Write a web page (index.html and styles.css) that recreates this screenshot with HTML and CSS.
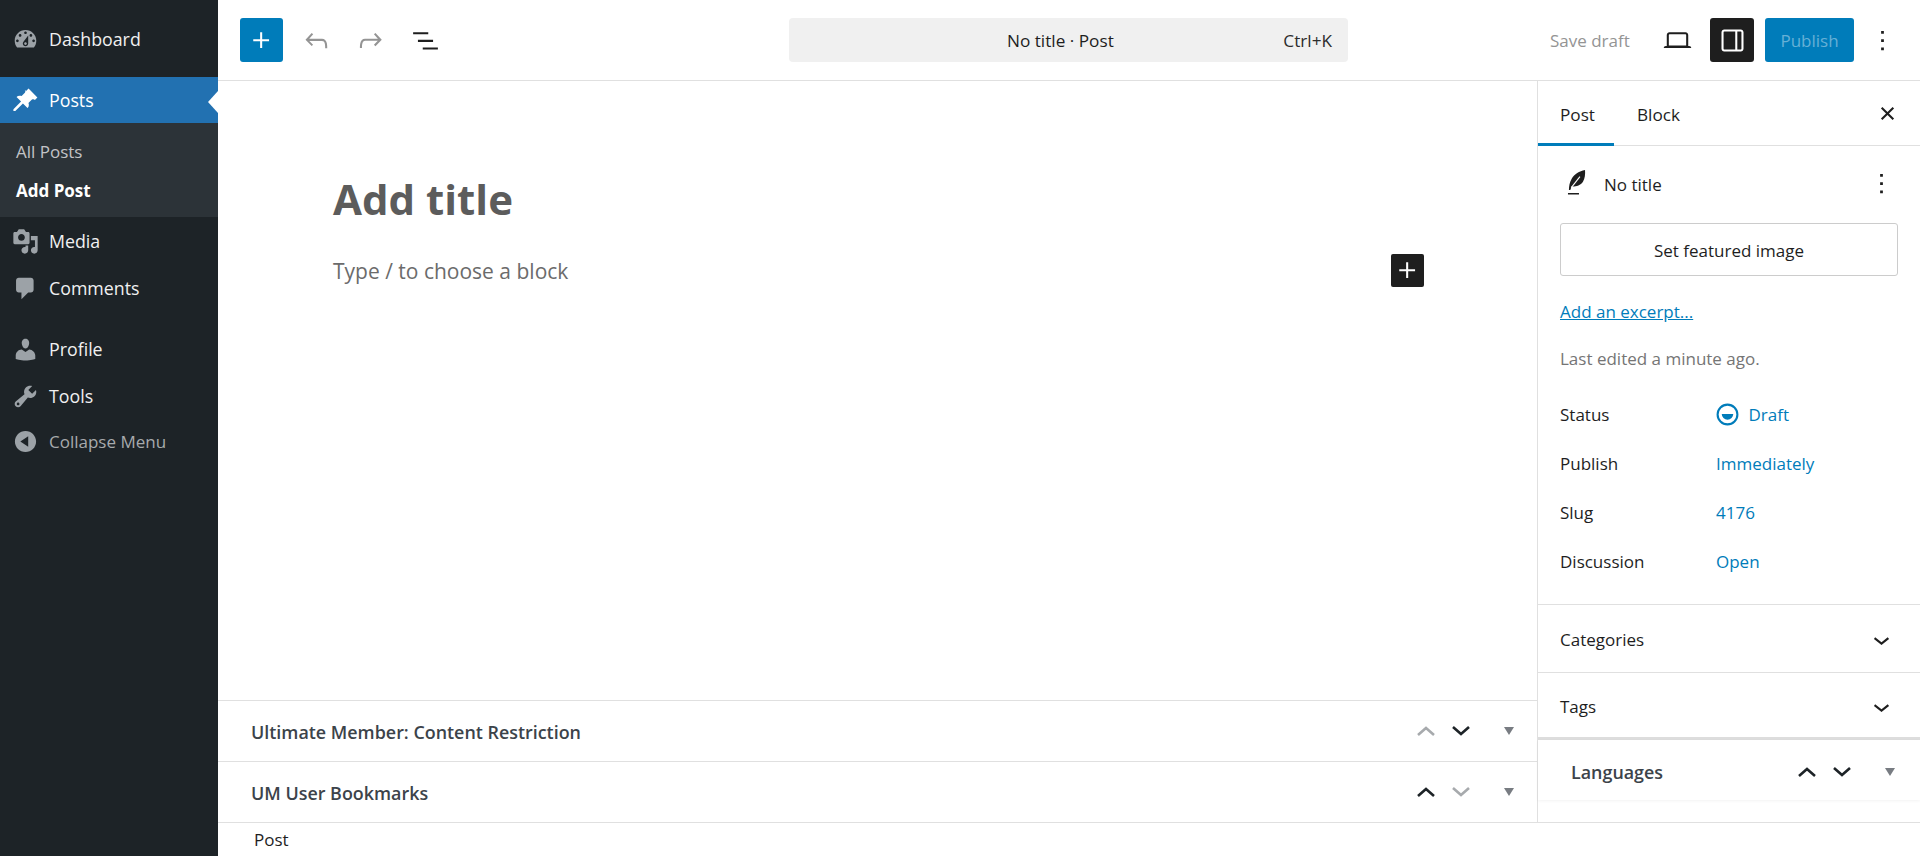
FILE: index.html
```html
<!DOCTYPE html>
<html lang="en">
<head>
<meta charset="utf-8">
<title>Add New Post</title>
<link rel="stylesheet" href="styles.css">
</head>
<body>
<div class="app">
  <nav class="adminmenu">
    <a class="menu-item first"><svg class="dash" viewBox="0 0 20 20"><path d="M3.76 16h12.48c1.1-1.37 1.76-3.11 1.76-5 0-4.42-3.58-8-8-8s-8 3.58-8 8c0 1.89.66 3.63 1.76 5zM10 4c.55 0 1 .45 1 1s-.45 1-1 1-1-.45-1-1 .45-1 1-1zM6 6c.55 0 1 .45 1 1s-.45 1-1 1-1-.45-1-1 .45-1 1-1zm8 0c.55 0 1 .45 1 1s-.45 1-1 1-1-.45-1-1 .45-1 1-1zm-5.37 5.55L12 7v6c0 1.1-.9 2-2 2s-2-.9-2-2c0-.57.24-1.08.63-1.45zM4 10c.55 0 1 .45 1 1s-.45 1-1 1-1-.45-1-1 .45-1 1-1zm12 0c.55 0 1 .45 1 1s-.45 1-1 1-1-.45-1-1 .45-1 1-1zm-5 3c0-.55-.45-1-1-1s-1 .45-1 1 .45 1 1 1 1-.45 1-1z" fill-rule="evenodd"/></svg>Dashboard</a>
    <a class="menu-item current"><svg class="dash" viewBox="0 0 20 20"><path d="M10.44 3.02l1.82-1.82 6.54 6.54-1.82 1.82c-.35-.35-.75-.53-1.2-.53-.4 0-.8.09-1.2.35l-2.4 2.4c.2.5.3.99.3 1.47 0 .89-.31 1.65-.95 2.28l-.05.05-3.38-3.38-5.66 5.66-1.41-.03.03-1.38 5.66-5.66-3.38-3.38c.01 0 .02 0 .03-.02.63-.63 1.39-.94 2.28-.94.48 0 .97.1 1.47.3l2.4-2.4c.26-.4.35-.8.35-1.2 0-.45-.18-.85-.53-1.2z"/></svg>Posts<span class="menu-arrow"></span></a>
    <div class="submenu">
      <a class="sub-item">All Posts</a>
      <a class="sub-item active">Add Post</a>
    </div>
    <a class="menu-item media"><svg class="dash" viewBox="0 0 20 20"><path d="M13 11V4c0-.55-.45-1-1-1h-1.67L9 1H5L3.67 3H2c-.55 0-1 .45-1 1v7c0 .55.45 1 1 1h10c.55 0 1-.45 1-1zM7 4.5c1.38 0 2.5 1.12 2.5 2.5S8.38 9.5 7 9.5 4.5 8.38 4.5 7 5.62 4.5 7 4.5zM14 6h5v10.5c0 1.38-1.12 2.5-2.5 2.5S14 17.88 14 16.5s1.12-2.5 2.5-2.5c.17 0 .34.02.5.05V9h-3V6zm-4 8.05V13h2v3.5c0 1.38-1.12 2.5-2.5 2.5S7 17.88 7 16.5 8.12 14 9.5 14c.17 0 .34.02.5.05z" fill-rule="evenodd"/></svg>Media</a>
    <a class="menu-item"><svg class="dash" viewBox="0 0 20 20"><path d="M5 2h9c1.1 0 2 .9 2 2v7c0 1.1-.9 2-2 2h-2l-5 5v-5H5c-1.1 0-2-.9-2-2V4c0-1.1.9-2 2-2z"/></svg>Comments</a>
    <a class="menu-item gap-top"><svg class="dash" viewBox="0 0 20 20"><path d="M10 9.25c-2.27 0-2.73-3.44-2.73-3.44C7 4.02 7.82 2 9.97 2c2.16 0 2.98 2.02 2.71 3.81 0 0-.41 3.44-2.68 3.44zm0 2.57L12.72 10c2.39 0 4.52 2.33 4.52 4.53v2.49s-3.65 1.13-7.24 1.13c-3.65 0-7.24-1.13-7.24-1.13v-2.49c0-2.25 1.94-4.48 4.47-4.48z"/></svg>Profile</a>
    <a class="menu-item"><svg class="dash" viewBox="0 0 20 20"><path d="M16.68 9.77c-1.34 1.34-3.3 1.67-4.95.99l-5.41 6.52c-.99.99-2.59.99-3.58 0s-.99-2.59 0-3.57l6.52-5.42c-.68-1.65-.35-3.61.99-4.95 1.28-1.28 3.12-1.62 4.72-1.06l-2.89 2.89 2.82 2.82 2.86-2.87c.53 1.58.18 3.39-1.08 4.65zM3.81 16.21c.4.39 1.04.39 1.43 0 .4-.4.4-1.04 0-1.43-.39-.4-1.03-.4-1.43 0-.39.39-.39 1.03 0 1.43z" fill-rule="evenodd"/></svg>Tools</a>
    <a class="menu-item collapse"><svg class="dash" viewBox="0 0 20 20"><path d="M10 2.16c4.33 0 7.84 3.51 7.84 7.84s-3.51 7.84-7.84 7.84S2.16 14.33 2.16 10 5.71 2.16 10 2.16zm2 11.72V6.12L6.18 9.97z"/></svg>Collapse Menu</a>
  </nav>

  <div class="editor">
    <header class="topbar">
      <div class="tools-left">
        <button class="btn-inserter"><svg class="wp-icon" viewBox="0 0 24 24"><path d="M11 12.5V17.5H12.5V12.5H17.5V11H12.5V6H11V11H6V12.5H11Z"/></svg></button>
        <svg class="wp-icon muted" viewBox="0 0 24 24"><path d="M18.3 11.7c-.6-.6-1.4-.9-2.3-.9H6.7l2.9-3.3-1.1-1-4.5 5L8.5 16l1-1-2.7-2.7H16c.5 0 .9.2 1.3.5 1 1 1 3.4 1 4.5v.3h1.5v-.2c0-1.5 0-4.3-1.5-5.7z"/></svg>
        <svg class="wp-icon muted" viewBox="0 0 24 24"><path d="M15.6 6.5l-1.1 1 2.9 3.3H8c-.9 0-1.7.3-2.3.9-1.4 1.5-1.4 4.2-1.4 5.6v.2h1.5v-.3c0-1.1 0-3.5 1-4.5.3-.3.7-.5 1.3-.5h9.2L14.5 15l1.1 1.1 4.6-4.6-4.6-5z"/></svg>
        <svg class="wp-icon" viewBox="0 0 24 24"><path d="M3 6h11v1.5H3V6Zm3.5 5.5h11V13h-11v-1.5ZM21 17H10v1.5h11V17Z"/></svg>
      </div>
      <div class="command-bar"><span class="command-title">No title · Post</span><span class="command-key">Ctrl+K</span></div>
      <div class="tools-right">
        <span class="save-draft">Save draft</span>
        <svg class="wp-icon laptop" viewBox="0 0 24 24"><path d="M20.5 16h-.7V8c0-1.1-.9-2-2-2H6.2c-1.1 0-2 .9-2 2v8h-.7c-.8 0-1.5.7-1.5 1.5h20c0-.8-.7-1.5-1.5-1.5zM5.7 8c0-.3.2-.5.5-.5h11.6c.3 0 .5.2.5.5v7.6H5.7V8z"/></svg>
        <button class="btn-toggle"><svg class="wp-icon" viewBox="0 0 24 24"><path d="M18 4H6c-1.1 0-2 .9-2 2v12c0 1.1.9 2 2 2h12c1.1 0 2-.9 2-2V6c0-1.1-.9-2-2-2zm-4 14.5H6c-.3 0-.5-.2-.5-.5V6c0-.3.2-.5.5-.5h8v13zm4.5-.5c0 .3-.2.5-.5.5h-2.5v-13H18c.3 0 .5.2.5.5v12z"/></svg></button>
        <button class="btn-publish">Publish</button>
        <svg class="wp-icon kebab" viewBox="0 0 24 24"><path d="M13 19h-2v-2h2v2zm0-6h-2v-2h2v2zm0-6h-2V5h2v2z"/></svg>
      </div>
    </header>

    <div class="workspace">
      <div class="content">
        <main class="canvas">
          <h1 class="post-title">Add title</h1>
          <div class="block-row">
            <span class="placeholder">Type / to choose a block</span>
            <button class="btn-block-add"><svg viewBox="0 0 24 24"><path d="M11 12.5V17.5H12.5V12.5H17.5V11H12.5V6H11V11H6V12.5H11Z"/></svg></button>
          </div>
        </main>
        <section class="metabox">
          <h2>Ultimate Member: Content Restriction</h2>
          <div class="mb-controls">
            <svg class="mb-arrow off" viewBox="0 0 20 14"><path d="M2 11l8-7 8 7"/></svg>
            <svg class="mb-arrow" viewBox="0 0 20 14"><path d="M2 3l8 7 8-7"/></svg>
            <span class="mb-tri"></span>
          </div>
        </section>
        <section class="metabox">
          <h2>UM User Bookmarks</h2>
          <div class="mb-controls">
            <svg class="mb-arrow" viewBox="0 0 20 14"><path d="M2 11l8-7 8 7"/></svg>
            <svg class="mb-arrow off" viewBox="0 0 20 14"><path d="M2 3l8 7 8-7"/></svg>
            <span class="mb-tri"></span>
          </div>
        </section>
      </div>

      <aside class="sidebar">
        <div class="tabs">
          <span class="tab active">Post</span>
          <span class="tab">Block</span>
          <svg class="wp-icon close" viewBox="0 0 24 24"><path d="M12 13.06l3.712 3.713 1.061-1.06L13.061 12l3.712-3.712-1.06-1.06L12 10.938 8.288 7.227l-1.061 1.06L10.939 12l-3.712 3.712 1.06 1.061L12 13.061z"/></svg>
        </div>
        <div class="summary">
          <div class="post-card">
            <svg class="feather" viewBox="0 0 24 24"><path d="M18.2 2.2C14 3.2 10.5 5 8.5 8.5 7 11 6.5 14 6.5 16.8h1l.9-2.6c3 .2 6.5-.7 8.3-3.5 1.5-2.3 1.7-5.5 1.5-8.5zM5.8 18.9h8V20h-8z" fill="#1e1e1e"/><path d="M8.2 15l6.3-8" stroke="#fff" stroke-width=".8" fill="none"/></svg>
            <span class="post-card-title">No title</span>
            <svg class="wp-icon kebab-sm" viewBox="0 0 24 24"><path d="M13 19h-2v-2h2v2zm0-6h-2v-2h2v2zm0-6h-2V5h2v2z"/></svg>
          </div>
          <button class="btn-featured">Set featured image</button>
          <a class="excerpt">Add an excerpt...</a>
          <p class="edited">Last edited a minute ago.</p>
          <dl class="props">
            <div class="prop"><dt>Status</dt><dd class="status"><svg viewBox="0 0 24 24"><circle cx="12" cy="12" r="9.5" fill="none" stroke="#007cba" stroke-width="2"/><path d="M6.5 11.5h11a5.5 5.5 0 0 1-11 0z" fill="#007cba"/></svg>Draft</dd></div>
            <div class="prop"><dt>Publish</dt><dd>Immediately</dd></div>
            <div class="prop"><dt>Slug</dt><dd>4176</dd></div>
            <div class="prop"><dt>Discussion</dt><dd>Open</dd></div>
          </dl>
        </div>
        <div class="panel">Categories<svg class="wp-icon chev" viewBox="0 0 24 24"><path d="M17.5 11.6L12 16l-5.5-4.4.9-1.2L12 14l4.5-3.6 1 1.2z"/></svg></div>
        <div class="panel tags">Tags<svg class="wp-icon chev" viewBox="0 0 24 24"><path d="M17.5 11.6L12 16l-5.5-4.4.9-1.2L12 14l4.5-3.6 1 1.2z"/></svg></div>
        <section class="languages">
          <h2>Languages</h2>
          <div class="lang-controls">
            <svg class="mb-arrow" viewBox="0 0 20 14"><path d="M2 11l8-7 8 7"/></svg>
            <svg class="mb-arrow" viewBox="0 0 20 14"><path d="M2 3l8 7 8-7"/></svg>
            <span class="mb-tri"></span>
          </div>
        </section>
      </aside>
    </div>

    <footer class="statusbar">Post</footer>
  </div>
</div>
</body>
</html>
```
FILE: styles.css
```css
* { box-sizing: border-box; }
html, body { margin: 0; height: 100%; overflow: hidden; }
body { font-family: "Open Sans", "Noto Sans", sans-serif; font-size: 17px; color: #1e1e1e; background: #fff; }
button { font: inherit; border: 0; padding: 0; }
svg { display: block; flex: none; }
.app { display: flex; height: 856px; }

/* admin menu */
.adminmenu { width: 218px; flex: none; background: #1d2327; padding-top: 20px; }
.menu-item { display: flex; align-items: center; height: 38px; padding-left: 12px; gap: 10px; color: #f0f0f1; position: relative; font-size: 17.8px; }
.dash { width: 27px; height: 27px; fill: #9ca2a7; }
.first { margin-bottom: 19px; }
.current { background: #2271b1; color: #fff; height: 46px; }
.current .dash { fill: #fff; }
.menu-arrow { position: absolute; right: 0; top: 14px; border: 11px solid transparent; border-left-width: 0; border-right: 10px solid #fff; }
.submenu { background: #2c3338; height: 94px; padding-top: 9px; margin-bottom: 5px; }
.sub-item { display: block; padding-left: 16px; height: 39px; line-height: 39px; color: #c3c4c7; }
.sub-item.active { color: #fff; font-weight: 700; }
.media { margin-bottom: 9px; }
.gap-top { margin-top: 23px; margin-bottom: 9px; }
.collapse { margin-top: 7px; color: #a7aaad; font-size: 17px; }

/* editor */
.editor { flex: 1; min-width: 0; display: flex; flex-direction: column; }
.topbar { height: 81px; flex: none; border-bottom: 1.5px solid #e0e0e0; display: flex; align-items: center; padding: 0 16px 0 22px; }
.wp-icon { width: 33px; height: 33px; fill: #1e1e1e; }
.wp-icon.muted { fill: #949494; }
.tools-left { display: flex; align-items: center; gap: 21.5px; width: 549px; }
.btn-inserter { width: 43px; height: 44px; background: #007cba; border-radius: 3px; display: flex; align-items: center; justify-content: center; margin-right: -5px; }
.btn-inserter .wp-icon { fill: #fff; }
.command-bar { width: 559px; height: 44px; background: #f0f0f0; border-radius: 4px; display: flex; align-items: center; padding: 0 16px 0 218px; justify-content: space-between; font-size: 17.2px; }
.command-key { color: #2c2c2c; }
.tools-right { flex: 1; display: flex; align-items: center; padding-left: 202px; }
.save-draft { color: #949494; width: 112px; white-space: nowrap; }
.laptop { margin-right: 16px; margin-left: -1px; }
.btn-toggle { width: 44px; height: 44px; background: #1e1e1e; border-radius: 3px; display: flex; align-items: center; justify-content: center; }
.btn-toggle .wp-icon { fill: #fff; }
.btn-publish { width: 89px; height: 44px; background: #007cba; border-radius: 3px; color: #66b0d6; margin-left: 11px; }
.kebab { margin-left: 12px; margin-right: 0; }

.workspace { flex: 1; min-height: 0; display: flex; }
.content { flex: 1; min-width: 0; display: flex; flex-direction: column; }
.canvas { flex: 1; padding: 91px 0 0 115px; }
.post-title { margin: 0; font-size: 42px; font-weight: 700; color: #5c5c5c; line-height: 54px; }
.block-row { display: flex; align-items: center; justify-content: space-between; width: 1091px; margin-top: 28px; height: 33px; }
.placeholder { font-size: 21px; color: #6b6b6b; }
.btn-block-add { width: 33px; height: 33px; background: #1e1e1e; border-radius: 2px; display: flex; align-items: center; justify-content: center; }
.btn-block-add svg { width: 33px; height: 33px; fill: #fff; }

.metabox { height: 61px; border-top: 1.5px solid #e0e0e0; display: flex; align-items: center; justify-content: space-between; padding: 0 0 0 33px; }
.metabox h2, .languages h2 { margin: 0; font-size: 17.9px; font-weight: 600; color: #3c434a; }
.metabox h2 { padding-top: 1px; }
.mb-controls, .lang-controls { display: flex; align-items: center; gap: 15px; }
.mb-controls { width: 121px; }
.lang-controls { width: 123px; }
.mb-arrow { width: 20px; height: 14px; fill: none; stroke: #1d2327; stroke-width: 2.6; }
.mb-arrow.off { stroke: #a7aaad; }
.mb-tri { width: 0; height: 0; margin-left: 18px; border: 5.5px solid transparent; border-top: 8px solid #787c82; border-bottom: 0; }

/* sidebar */
.sidebar { width: 383px; flex: none; border-left: 1.5px solid #e0e0e0; display: flex; flex-direction: column; }
.tabs { height: 65px; flex: none; border-bottom: 1.5px solid #e0e0e0; display: flex; align-items: center; padding-right: 16px; }
.tab { width: 76px; height: 65px; line-height: 67px; padding-left: 22px; font-size: 17.2px; }
.tab + .tab { padding-left: 23px; }
.tab.active { box-shadow: inset 0 -3px 0 #007cba; }
.close { margin-left: auto; }
.summary { border-bottom: 1.5px solid #e0e0e0; height: 459px; flex: none; padding: 0 22px; }
.post-card { display: flex; align-items: center; height: 75px; padding-top: 1px; }
.feather { width: 33px; height: 33px; margin-right: 11px; margin-top: -1px; }
.post-card-title { flex: 1; }
.kebab-sm { margin-top: -1px; }
.btn-featured { display: block; width: 100%; height: 53px; background: #fff; border: 1.5px solid #ccc; border-radius: 3px; color: #1e1e1e; margin-top: 2px; padding-top: 1px; }
.excerpt { display: block; margin-top: 21px; line-height: 30px; color: #007cba; text-decoration: underline; }
.edited { margin: 17px 0 0; line-height: 30px; color: #757575; }
.props { margin: 16px 0 0; }
.prop { display: flex; height: 49px; align-items: center; }
.prop dt { width: 156px; }
.prop dd { margin: 0; color: #007cba; display: flex; align-items: center; gap: 9px; }
.status svg { width: 25px; height: 25px; margin-left: -1.5px; }
.panel { height: 68px; flex: none; border-bottom: 1.5px solid #e0e0e0; display: flex; align-items: center; justify-content: space-between; padding: 1px 22px 0; }
.panel.tags { height: 67px; border-bottom: 3px solid #ddd; padding-top: 2px; }
.languages { height: 60px; display: flex; align-items: center; justify-content: space-between; padding: 3px 0 0 33px; box-shadow: 0 1px 3px rgba(0,0,0,.05); flex: none; }

.statusbar { height: 34px; flex: none; border-top: 1.5px solid #e0e0e0; padding-left: 36px; line-height: 34px; }
```
